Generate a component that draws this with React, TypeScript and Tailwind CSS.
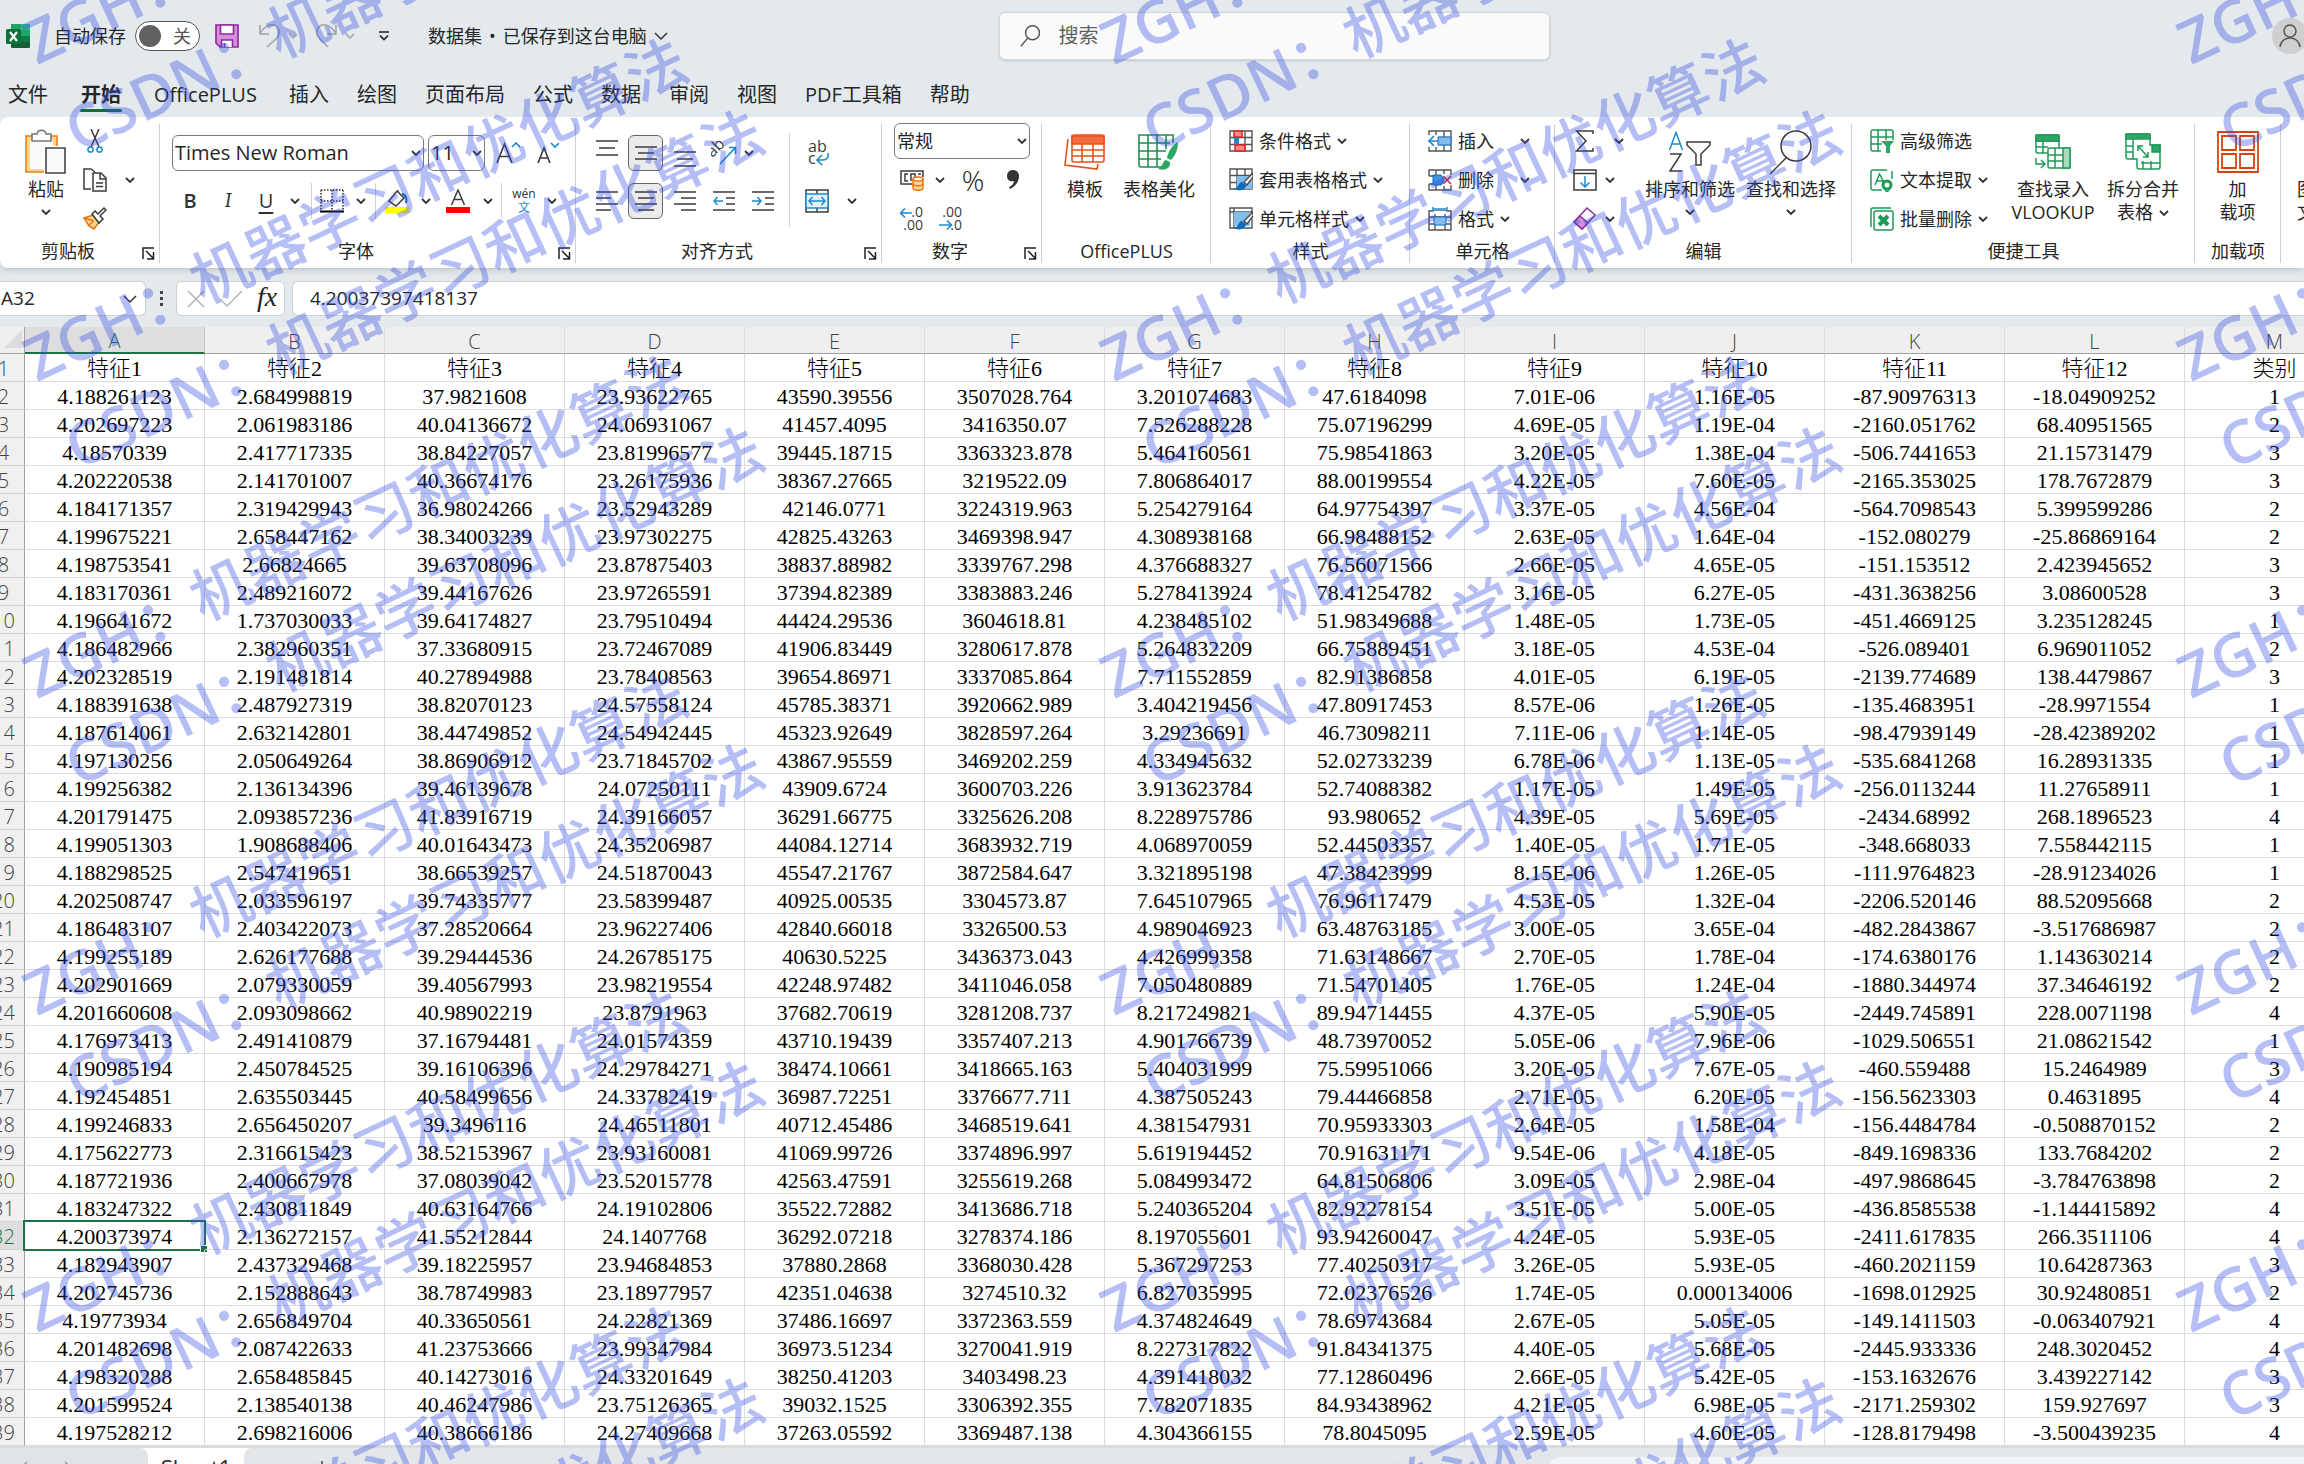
import clsx from "clsx";
import type { ReactNode } from "react";

const Chevron = ({ className = "" }: { className?: string }) => (
  <svg width="10" height="10" viewBox="0 0 10 10" fill="none" className={clsx("shrink-0", className)}>
    <path d="M1 3l4 4 4-4" stroke="#333" strokeWidth="1.8" />
  </svg>
);

const WideChevron = ({ className = "" }: { className?: string }) => (
  <svg width="14" height="10" viewBox="0 0 14 10" fill="none" className={clsx("shrink-0", className)}>
    <path d="M1 2l6 6 6-6" stroke="#333" strokeWidth="1.5" />
  </svg>
);

const Launcher = () => (
  <button aria-label="更多设置" className="absolute right-[5px] bottom-[8px]">
    <svg width="13" height="13" viewBox="0 0 13 13" fill="none" stroke="#222" strokeWidth="1.5">
      <path d="M1 12V1h11M4 4l7 7M11.5 5v7H5" />
    </svg>
  </button>
);

const ExcelLogo = () => (
  <svg width="24" height="24" viewBox="0 0 24 24">
    <rect x="5" y="0" width="19" height="24" rx="1.5" fill="#21a366" />
    <path d="M5 0h10v6H5z" fill="#21a366" />
    <path d="M15 0h7.5A1.5 1.5 0 0124 1.5V6h-9z" fill="#33c481" />
    <path d="M5 6h10v12H5zM15 12h9v6h-9z" fill="#107c41" />
    <path d="M5 18h19v4.5a1.5 1.5 0 01-1.5 1.5h-16A1.5 1.5 0 015 22.5z" fill="#185c37" />
    <rect x="0" y="5" width="15" height="15" rx="1.5" fill="#0f703b" />
    <path d="M4 8l7 9M11 8l-7 9" stroke="#fff" strokeWidth="2.2" />
  </svg>
);

const SaveIcon = () => (
  <svg width="24" height="24" viewBox="0 0 24 24" stroke="#8f2c9c" strokeWidth="1.7">
    <path d="M1 1h22v22H5l-4-4z" fill="#d68fdb" />
    <path d="M5.500 1h13v9h-13z" fill="#fff" />
    <path d="M6.500 23v-7h11v7" fill="#fff" />
    <path d="M9.500 19v4" />
  </svg>
);

const UndoIcon = () => (
  <svg width="24" height="26" viewBox="0 0 24 26" fill="none" stroke="#a0a4a8" strokeWidth="1.6">
    <path d="M2 2v9h9M2 11C6 3 13 0 18 3c5 4 4 9 0 13l-9 8" />
  </svg>
);

const RedoIcon = () => (
  <svg width="24" height="26" viewBox="0 0 24 26" fill="none" stroke="#a0a4a8" strokeWidth="1.6">
    <path d="M22 2v9h-9M22 11C18 3 11 0 6 3c-5 4-4 9 0 13l8 8" />
  </svg>
);

const PasteIcon = () => (
  <svg width="42" height="46" viewBox="0 0 42 46" fill="none">
    <path d="M1 7h31v36H1z" fill="#fad68f" stroke="#e8811c" strokeWidth="1.6" />
    <path d="M5 11h23v29H5z" fill="#fafafa" />
    <path d="M7 5h5c1-5 8-5 9 0h5v7H7z" fill="#fff" stroke="#777" strokeWidth="1.6" />
    <path d="M19 17h22v29H19z" fill="#fff" />
    <path d="M21 19h19v25H21z" fill="#fafafa" stroke="#444" strokeWidth="1.6" />
  </svg>
);

const CutIcon = () => (
  <svg width="16" height="24" viewBox="0 0 16 24" fill="none" strokeWidth="1.5">
    <path d="M4 0l8 18M12 0L4 18" stroke="#3b3b3b" />
    <circle cx="3.500" cy="20.500" r="2.600" stroke="#1e8bcd" />
    <circle cx="12.500" cy="20.500" r="2.600" stroke="#1e8bcd" />
  </svg>
);

const CopyIcon = () => (
  <svg width="24" height="24" viewBox="0 0 24 24" fill="none" stroke="#3b3b3b" strokeWidth="1.5">
    <path d="M8 21H1V1h7l4 3" />
    <path d="M10 5h8l5 5v13H10zM17 5v6h6" fill="#fff" />
    <path d="M13 15h7M13 18.500h7" />
  </svg>
);

const BrushIcon = () => (
  <svg width="24" height="23" viewBox="0 0 24 23" fill="none" strokeWidth="1.5">
    <path d="M1 11l9-3 6 7-5 7-5-3z" fill="#fad68f" stroke="#e8730c" />
    <path d="M1 11l10 3M6 18l4-3" stroke="#e8730c" />
    <path d="M9 7l3-3 3 3 6-6 2 2-6 6 3 3-4 4z" fill="#fff" stroke="#3b3b3b" />
  </svg>
);

const BordersIcon = () => (
  <svg width="24" height="24" viewBox="0 0 24 24" fill="none" stroke="#333">
    <path d="M1 1h22M1 12h22M1 1v20M12 1v20M23 1v20" strokeWidth="1.6" strokeDasharray="1.500 1.500" />
    <path d="M0 22.500h24" strokeWidth="2" stroke="#000" />
  </svg>
);

const FillIcon = () => (
  <svg width="24" height="24" viewBox="0 0 24 24" fill="none">
    <path d="M12 2L4 12l7 5 8-8-6-6V1" stroke="#3b3b3b" strokeWidth="1.5" />
    <path d="M17 5c5 1 5 6 4 9" stroke="#0f6cbd" strokeWidth="2" />
    <path d="M0 18h24v6H0z" fill="#ff0" />
  </svg>
);

const FontColorIcon = () => (
  <svg width="24" height="24" viewBox="0 0 24 24" fill="none">
    <path d="M5.500 16L12 1l6.500 15M8 10.500h8" stroke="#3b3b3b" strokeWidth="1.5" />
    <path d="M0 18h24v6H0z" fill="#f00" />
  </svg>
);

// Horizontal strokes as [x1, x2, y] inside a 22x20 box
const Lines = ({ rows, children }: { rows: number[][]; children?: ReactNode }) => (
  <svg width="22" height="20" viewBox="0 0 22 20" fill="none" strokeWidth="1.5">
    {rows.map(([a, b, y]) => (
      <path key={y} d={`M${a} ${y}H${b}`} stroke="#3b3b3b" />
    ))}
    {children}
  </svg>
);

const OrientationIcon = () => (
  <svg width="26" height="26" viewBox="0 0 26 26" fill="none">
    <text x="1" y="15" fontSize="16" fill="#3b3b3b" transform="rotate(-45 5 16)">ab</text>
    <path d="M9 24L24 8M18 7.500h6.500V14" stroke="#1e8bcd" strokeWidth="1.6" />
  </svg>
);

const WrapIcon = () => (
  <svg width="22" height="26" viewBox="0 0 22 26" fill="none">
    <text x="0" y="12" fontSize="16" fill="#3b3b3b">ab</text>
    <text x="0" y="24" fontSize="16" fill="#3b3b3b">c</text>
    <path d="M20 13c1 4-1 7-5 7h-5M14 15l-5 5 5 5" stroke="#1e8bcd" strokeWidth="1.6" />
  </svg>
);

const MergeIcon = () => (
  <svg width="24" height="24" viewBox="0 0 24 24" fill="none" strokeWidth="1.5">
    <path d="M1 1h22v22H1zM12 1v4M12 19v4" stroke="#3b3b3b" />
    <path d="M1 5h22v14H1z" fill="#e4f1fb" stroke="#1e8bcd" />
    <path d="M4 12h16M7.500 8L4 12l3.500 4M16.500 8l3.500 4-3.500 4" stroke="#1e8bcd" />
  </svg>
);

const CurrencyIcon = () => (
  <svg width="24" height="22" viewBox="0 0 24 22" fill="none" strokeWidth="1.5">
    <path d="M12 15H1V2h22v6" stroke="#3b3b3b" />
    <path d="M8 5H5v7h3M11 12V5h4v3M18 5h3" stroke="#3b3b3b" />
    <path d="M13 10v9c0 3 10 3 10 0v-9" fill="#fad68f" stroke="#e8730c" />
    <ellipse cx="18" cy="10" rx="5" ry="2" fill="#fff" stroke="#e8730c" />
    <path d="M13 14.500c0 3 10 3 10 0" stroke="#e8730c" />
  </svg>
);

const DecimalIcon = ({ less = false }: { less?: boolean }) => (
  <svg width="26" height="26" viewBox="0 0 26 26" fill="none">
    <text x="24" y="11" fontSize="14" fill="#3b3b3b" textAnchor="end">{less ? ".00" : ".0"}</text>
    <text x="24" y="24" fontSize="14" fill="#3b3b3b" textAnchor="end">{less ? ".0" : ".00"}</text>
    <path
      d={less ? "M1 19h12M9 14.500l4.500 4.500L9 23.500" : "M2 7h11M6 2.500L1.500 7 6 11.500"}
      stroke="#1e8bcd"
      strokeWidth="1.6"
    />
  </svg>
);

const TemplateIcon = () => (
  <svg width="42" height="36" viewBox="0 0 42 36" fill="none" stroke="#e8521a" strokeWidth="1.6">
    <path d="M4 5L1 31l32 4 1-5" />
    <rect x="8" y="1" width="32" height="27" rx="2" fill="#fff" />
    <path d="M8 2h32v8H8z" fill="#f26b3a" />
    <path d="M8 16h32M8 22h32M18 10v18M29 10v18" />
  </svg>
);

const BeautifyIcon = () => (
  <svg width="42" height="36" viewBox="0 0 42 36" fill="none" stroke="#1e8e4e" strokeWidth="1.6">
    <path d="M24 33H3a2 2 0 01-2-2V1h34v8M1 9h31M1 17h27M1 25h22M10 1v32M19 1v32M28 1v14" />
    <path d="M40 8c-6 3-10 10-11 16l4 2c5-5 7-12 7-18zM28 26c-4 1-2 6-8 9 6 2 13 0 12-7z" fill="#2ba866" stroke="none" />
  </svg>
);

const grid = "M1 1h22v20H1zM1 7.500h22M1 14.500h22M8 1v20M16 1v20";

const CondFormatIcon = () => (
  <svg width="24" height="22" viewBox="0 0 24 22" fill="none">
    <path d={grid} stroke="#555" strokeWidth="1.4" />
    <path d="M5 7h5v8H5z" fill="#1e8bcd" />
    <path d="M5 1h8v6H5zM6 15h10v6H6z" fill="#f88" stroke="#e02020" strokeWidth="1.500" />
  </svg>
);

const StyleIcon = ({ cell = false }: { cell?: boolean }) => (
  <svg width="24" height="23" viewBox="0 0 24 23" fill="none">
    <path d={cell ? "M1 1h22v20H1zM1 5h22M5 1v20" : grid} stroke="#555" strokeWidth="1.4" />
    <path d={cell ? "M5 5h16v14H5z" : "M8 8h15v13H8z"} fill="#83bdec" />
    <path d="M24 5l-9 9 3 3 6-8z" fill="#fff" stroke="#444" strokeWidth="1.3" />
    <path d="M13 14c-4 0-3 6-8 7 5 3 12 1 12-4z" fill="#0f6cbd" />
  </svg>
);

const InsertIcon = () => (
  <svg width="24" height="22" viewBox="0 0 24 22" fill="none">
    <path d={grid} stroke="#555" strokeWidth="1.4" />
    <path d="M0 5h10v12H0z" fill="#fff" />
    <path d="M10 7h13v8H10z" fill="#83bdec" stroke="#0f6cbd" />
    <path d="M11 11H1M6 6l-5 5 5 5" stroke="#1e8bcd" strokeWidth="1.7" />
  </svg>
);

const DeleteIcon = () => (
  <svg width="24" height="22" viewBox="0 0 24 22" fill="none">
    <path d="M1 7V1h22v5M1 15v6h22v-5M8 1v5M16 1v4M8 16v5M16 17v4M1 7h5M1 15h5" stroke="#555" strokeWidth="1.4" />
    <path d="M5 6h8l3 5-3 5H5z" fill="#3f95e0" stroke="#0f6cbd" />
    <path d="M15 7l8 8M23 7l-8 8" stroke="#d13438" strokeWidth="1.7" />
  </svg>
);

const FormatIcon = () => (
  <svg width="24" height="24" viewBox="0 0 24 24" fill="none">
    <path d="M1 4h22v19H1zM1 10h22M1 17h22M7 4v19M17 4v19" stroke="#555" strokeWidth="1.4" />
    <path d="M4 4h16v3H4z" fill="#fff" />
    <path d="M6 10h12v8H6z" fill="#83bdec" stroke="#0f6cbd" />
    <path d="M5 2h14M5 0v5M19 0v5" stroke="#1e8bcd" strokeWidth="1.5" />
  </svg>
);

const SigmaIcon = () => (
  <svg width="20" height="22" viewBox="0 0 20 22" fill="none" stroke="#3b3b3b" strokeWidth="1.5">
    <path d="M18 4V1H1.500L11 11 1.500 21H18v-3" />
  </svg>
);

const FillDownIcon = () => (
  <svg width="24" height="22" viewBox="0 0 24 22" fill="none" strokeWidth="1.5">
    <path d="M1 1h22v20H1zM1 4.500h22" stroke="#3b3b3b" />
    <path d="M12 7v11M7.500 13.500L12 18l4.500-4.500" stroke="#1e8bcd" />
  </svg>
);

const EraserIcon = () => (
  <svg width="24" height="23" viewBox="0 0 24 23" stroke="#8f2c9c" strokeWidth="1.500">
    <path d="M14 1l8 7-13 14-8-7z" fill="#fff" />
    <path d="M7 9l8 7-6 6-8-7z" fill="#d68fdb" />
  </svg>
);

const SortIcon = () => (
  <svg width="44" height="42" viewBox="0 0 44 42" fill="none" strokeWidth="1.5">
    <path d="M1.500 19L8 1.500 14.500 19M4 13h8" stroke="#1e8bcd" />
    <path d="M2 23h11L2 40h12" stroke="#3b3b3b" />
    <path d="M19 11h23v3l-9 9v11h-5V23l-9-9z" fill="#fafafa" stroke="#3b3b3b" />
  </svg>
);

const FindIcon = () => (
  <svg width="44" height="46" viewBox="0 0 44 46" fill="none" stroke="#3b3b3b" strokeWidth="1.5">
    <circle cx="27" cy="17" r="15" fill="#fafafa" />
    <path d="M17 29L1 45" />
  </svg>
);

const FilterIcon = () => (
  <svg width="24" height="24" viewBox="0 0 24 24" fill="none" stroke="#1e9a57" strokeWidth="1.500">
    <path d="M11 22H3a2 2 0 01-2-2V3a2 2 0 012-2h18a2 2 0 012 2v8M1 8h22M1 15h11M8 1v21M16 1v10" />
    <path d="M11 12h13l-4 5v7h-4v-7z" fill="#2ba866" stroke="none" />
  </svg>
);

const ExtractIcon = () => (
  <svg width="24" height="24" viewBox="0 0 24 24" fill="none" stroke="#1e9a57" strokeWidth="1.500">
    <path d="M12 22H3a2 2 0 01-2-2V4a2 2 0 012-2h14M22 3v8M5 17l4.500-11L14 14M7 13h6" />
    <circle cx="17" cy="17" r="4" strokeWidth="3" />
    <path d="M15 22l2 2 2-2" />
  </svg>
);

const BatchDeleteIcon = () => (
  <svg width="24" height="24" viewBox="0 0 24 24" fill="none" stroke="#1e9a57" strokeWidth="1.500">
    <path d="M1 20V3a2 2 0 012-2h18" />
    <rect x="4" y="4" width="19" height="19" rx="2" />
    <path d="M9 9l9 9M18 9l-9 9" strokeWidth="4" />
  </svg>
);

const LookupIcon = () => (
  <svg width="36" height="36" viewBox="0 0 36 36" fill="none" stroke="#1e9a57" strokeWidth="1.500">
    <rect x="1" y="1" width="23" height="18" rx="2" />
    <path d="M1 7h23M1 13h12M8 7v12M1 24v6h8M6 26l4 4-4 4" />
    <path d="M1 1h23v6H1z" fill="#2ba866" />
    <rect x="13" y="14" width="22" height="20" rx="2" fill="#fff" />
    <path d="M13 21h22M13 27h22M20 14v20" />
    <path d="M28 14h7v20h-7z" fill="#a8dcc0" />
  </svg>
);

const SplitIcon = () => (
  <svg width="36" height="38" viewBox="0 0 36 38" fill="none" stroke="#1e9a57" strokeWidth="1.500">
    <path d="M1 3a2 2 0 012-2h20a2 2 0 012 2v9h10v22a2 2 0 01-2 2H14a2 2 0 01-2-2v-8H3a2 2 0 01-2-2zM1 13h7M1 19h7M8 6v20M16 30h19M18 28v8M26 28v8" />
    <path d="M1 1h24v5H1zM27 12h8v7h-8z" fill="#2ba866" />
    <path d="M13 13l10 11M13 18v-5h5M23 19v5h-5" />
  </svg>
);

const AddInsIcon = () => (
  <svg width="42" height="42" viewBox="0 0 42 42" fill="none" stroke="#d8430f" strokeWidth="1.800">
    <path d="M1 1h40v40H1z" />
    <path d="M5 5h14v14H5zM23 5h14v14H23zM5 23h14v14H5zM23 23h14v14H23z" />
  </svg>
);

type GroupProps = { label: string; className: string; launcher?: boolean; children: ReactNode };

const Group = ({ label, className, launcher, children }: GroupProps) => (
  <section className={clsx("relative flex shrink-0 flex-col", className)}>
    <div className="flex h-[118px]">{children}</div>
    <h2 className={clsx("text-center text-lg leading-6", launcher && "pr-6")}>{label}</h2>
    {launcher && <Launcher />}
    <span className="absolute top-[3px] right-0 bottom-[5px] w-px bg-[#d0d0d0]" />
  </section>
);

const BigButton = ({ icon, lines, chevron, className = "" }: any) => (
  <button className={clsx("flex flex-col items-center text-lg leading-[23px] whitespace-nowrap", className)}>
    <span className="flex h-[57px] items-center pt-1">{icon}</span>
    {lines.map((line: string, i: number) => (
      <span key={line} className="flex items-center gap-[6px]">
        {line}
        {chevron === "inline" && i === lines.length - 1 && <Chevron />}
      </span>
    ))}
    {chevron === "below" && <Chevron className="mt-[6px]" />}
  </button>
);

const RowButton = ({ icon, text, chevron = true, wide = false }: any) => (
  <button className="flex h-[39px] items-center gap-[6px] text-lg whitespace-nowrap">
    <span className="flex w-6 justify-center">{icon}</span>
    {text}
    {chevron && <Chevron className={wide ? "ml-[20px]" : ""} />}
  </button>
);

const IconButton = ({ label, className = "", children }: any) => (
  <button aria-label={label} className={clsx("flex h-9 shrink-0 items-center justify-center", className)}>
    {children}
  </button>
);

const Combo = ({ label, value, className, textClass = "" }: any) => (
  <label className={clsx("relative block h-9 shrink-0", className)}>
    <span className="sr-only">{label}</span>
    <select
      className={clsx(
        "h-9 w-full appearance-none rounded-md border border-[#7a7a7a] bg-white pl-[2px]",
        textClass
      )}
    >
      <option>{value}</option>
    </select>
    <Chevron className="pointer-events-none absolute top-[13px] right-[3px]" />
  </label>
);

const Sep = ({ className = "" }: { className?: string }) => (
  <span className={clsx("w-px shrink-0 self-stretch bg-[#d0d0d0]", className)} />
);

const TitleBar = () => (
  <header className="flex h-[73px] shrink-0 items-start">
    <div className="flex h-[72px] w-[999px] shrink-0 items-center pl-[6px] text-lg leading-6">
      <ExcelLogo />
      <label className="ml-6 flex items-center gap-[9px]">
        自动保存
        <input type="checkbox" role="switch" className="sr-only" />
        <span className="flex h-[30px] w-[65px] items-center justify-between rounded-full border border-[#555] bg-white pr-2 pl-[3px] text-[#555]">
          <span className="size-[22px] rounded-full bg-[#606060]" />关
        </span>
      </label>
      <IconButton label="保存" className="ml-[15px]"><SaveIcon /></IconButton>
      <IconButton label="撤消" className="ml-[19px]"><UndoIcon /></IconButton>
      <Chevron className="ml-[6px] opacity-30" />
      <IconButton label="恢复" className="ml-[16px]"><RedoIcon /></IconButton>
      <Chevron className="ml-[7px] opacity-30" />
      <IconButton label="自定义快速访问工具栏" className="ml-[23px]">
        <svg width="12" height="12" viewBox="0 0 12 12" fill="none" stroke="#222" strokeWidth="1.700">
          <path d="M1 2h10M2 5.500l4 4 4-4" />
        </svg>
      </IconButton>
      <button className="ml-[38px] flex items-center gap-[7px] whitespace-nowrap">
        <span>数据集</span>
        <span>•</span>
        <span>已保存到这台电脑</span>
        <WideChevron />
      </button>
    </div>
    <label className="mt-3 flex h-12 w-[551px] shrink-0 items-center rounded-md border border-[#d5d5d5] bg-[#fafafa] pl-5 shadow-sm">
      <svg width="22" height="24" viewBox="0 0 22 24" fill="none" stroke="#555" strokeWidth="1.500">
        <circle cx="13.500" cy="8.500" r="7.500" />
        <path d="M8.500 14L1 23" />
      </svg>
      <input aria-label="搜索" placeholder="搜索" className="ml-[18px] w-full bg-transparent text-xl outline-none placeholder:text-[#606060]" />
    </label>
    <button aria-label="帐户" className="mt-[18px] -mr-1 ml-auto flex size-9 items-center justify-center rounded-full bg-[#cfcfcf]">
      <svg width="22" height="24" viewBox="0 0 22 24" fill="none" stroke="#555" strokeWidth="1.500">
        <circle cx="11" cy="7" r="6" />
        <path d="M1 23c1-12 19-12 20 0" />
      </svg>
    </button>
  </header>
);

const tabs = ["文件", "开始", "OfficePLUS", "插入", "绘图", "页面布局", "公式", "数据", "审阅", "视图", "PDF工具箱", "帮助"];

const TabBar = () => (
  <nav className="flex h-11 shrink-0 gap-7 pl-2 text-xl">
    {tabs.map((tab) => (
      <button
        key={tab}
        className={clsx(
          "flex h-11 flex-col items-center whitespace-nowrap",
          tab === "开始" && "mx-1 font-bold",
          tab === "OfficePLUS" && "mr-1"
        )}
      >
        <span className="h-9 leading-[44px]">{tab}</span>
        {tab === "开始" && <span className="h-[3px] w-[42px] rounded-full bg-[#0f703b]" />}
      </button>
    ))}
  </nav>
);

const Ribbon = () => (
  <div className="flex h-[151px] shrink-0 overflow-hidden rounded-l-lg bg-white pt-1 shadow-md">
    <Group label="剪贴板" className="w-[160px]" launcher>
      <BigButton icon={<PasteIcon />} lines={["粘贴"]} chevron="below" className="ml-[22px] w-[48px]" />
      <div className="ml-[13px]">
        <IconButton label="剪切" className="h-[39px] w-6"><CutIcon /></IconButton>
        <div className="flex items-center gap-[18px]">
          <IconButton label="复制" className="h-[39px] w-6"><CopyIcon /></IconButton>
          <Chevron />
        </div>
        <IconButton label="格式刷" className="h-[39px] w-6"><BrushIcon /></IconButton>
      </div>
    </Group>

    <Group label="字体" className="w-[416px]" launcher>
      <div className="flex flex-col gap-3 pt-[14px]">
        <div className="flex items-center pl-3">
          <Combo label="字体" value="Times New Roman" className="w-[252px]" textClass="text-xl" />
          <Combo label="字号" value="11" className="ml-1 w-[57px]" textClass="text-xl" />
          <IconButton label="增大字号" className="ml-[4px] w-[38px]">
            <svg width="26" height="24" viewBox="0 0 26 24" fill="none" strokeWidth="1.600">
              <path d="M2 22L9.500 3 17 22M5 15.500h9" stroke="#3b3b3b" />
              <path d="M17 6l4-4 4 4" stroke="#1e8bcd" />
            </svg>
          </IconButton>
          <IconButton label="减小字号" className="w-[38px]">
            <svg width="26" height="24" viewBox="0 0 26 24" fill="none" strokeWidth="1.600">
              <path d="M5 22l6-15 6 15M7 17h8" stroke="#3b3b3b" />
              <path d="M18 2l4 4 4-4" stroke="#1e8bcd" />
            </svg>
          </IconButton>
        </div>
        <div className="flex items-center pl-[11px] text-[#333]">
          <IconButton label="加粗" className="w-[38px] text-xl font-semibold">B</IconButton>
          <IconButton label="倾斜" className="w-[38px] font-serif text-xl italic">I</IconButton>
          <IconButton label="下划线" className="w-[38px] text-xl underline underline-offset-4">U</IconButton>
          <IconButton label="下划线样式" className="w-5"><Chevron /></IconButton>
          <Sep className="mx-[6px]" />
          <IconButton label="边框" className="w-7"><BordersIcon /></IconButton>
          <IconButton label="边框样式" className="w-[29px]"><Chevron /></IconButton>
          <Sep />
          <IconButton label="填充颜色" className="w-[41px]"><FillIcon /></IconButton>
          <IconButton label="选择填充颜色" className="w-[18px]"><Chevron /></IconButton>
          <IconButton label="字体颜色" className="w-[46px]"><FontColorIcon /></IconButton>
          <IconButton label="选择字体颜色" className="w-[14px]"><Chevron /></IconButton>
          <Sep className="mx-[6px]" />
          <IconButton label="拼音" className="w-8 flex-col text-xs leading-[14px]">
            wén<span className="text-[#1e8bcd]">文</span>
          </IconButton>
          <IconButton label="拼音设置" className="w-6"><Chevron /></IconButton>
        </div>
      </div>
    </Group>

    <Group label="对齐方式" className="w-[306px]" launcher>
      <div className="flex flex-col gap-3 pt-[14px] pl-[11px]">
        <div className="flex">
          <IconButton label="顶端对齐" className="w-[39px] pb-[10px]"><Lines rows={[[0, 22, 3], [3, 19, 10], [0, 22, 17]]} /></IconButton>
          <IconButton label="垂直居中" className="mx-[2px] w-[35px] rounded-md border border-[#666] bg-[#ebebeb]"><Lines rows={[[0, 22, 4], [3, 19, 10], [0, 22, 16]]} /></IconButton>
          <IconButton label="底端对齐" className="w-[39px] pt-[12px]"><Lines rows={[[0, 22, 3], [3, 19, 10], [0, 22, 17]]} /></IconButton>
          <IconButton label="方向" className="w-[39px]"><OrientationIcon /></IconButton>
          <IconButton label="方向选项" className="w-3"><Chevron /></IconButton>
        </div>
        <div className="flex">
          <IconButton label="左对齐" className="w-[39px]"><Lines rows={[[0, 22, 1], [0, 15, 7], [0, 22, 13], [0, 15, 19]]} /></IconButton>
          <IconButton label="居中" className="mx-[2px] w-[35px] rounded-md border border-[#666] bg-[#ebebeb]"><Lines rows={[[0, 22, 1], [3, 19, 7], [0, 22, 13], [3, 19, 19]]} /></IconButton>
          <IconButton label="右对齐" className="w-[39px]"><Lines rows={[[0, 22, 1], [7, 22, 7], [0, 22, 13], [7, 22, 19]]} /></IconButton>
          <IconButton label="减少缩进量" className="w-[39px]">
            <Lines rows={[[0, 22, 1], [13, 22, 7], [13, 22, 13], [0, 22, 19]]}><path d="M10 10H1M4.500 6L1 10l3.500 4" stroke="#1e8bcd" /></Lines>
          </IconButton>
          <IconButton label="增加缩进量" className="w-[39px]">
            <Lines rows={[[0, 22, 1], [13, 22, 7], [13, 22, 13], [0, 22, 19]]}><path d="M0 10h9M5.500 6L9 10l-3.500 4" stroke="#1e8bcd" /></Lines>
          </IconButton>
        </div>
      </div>
      <Sep className="mt-3 mb-3 ml-[7px]" />
      <div className="flex flex-col gap-3 pt-[14px]">
        <IconButton label="自动换行" className="w-[58px]"><WrapIcon /></IconButton>
        <div className="flex">
          <IconButton label="合并后居中" className="w-[54px]"><MergeIcon /></IconButton>
          <IconButton label="合并选项" className="w-4"><Chevron /></IconButton>
        </div>
      </div>
    </Group>

    <Group label="数字" className="w-[160px]" launcher>
      <div className="flex flex-col gap-[3px] pt-[2px] pl-3">
        <Combo label="数字格式" value="常规" className="w-[136px]" textClass="text-lg" />
        <div className="flex items-center">
          <IconButton label="会计数字格式" className="w-9"><CurrencyIcon /></IconButton>
          <IconButton label="会计格式选项" className="w-5"><Chevron /></IconButton>
          <IconButton label="百分比样式" className="w-[46px] text-[28px] font-light text-[#222]">%</IconButton>
          <IconButton label="千位分隔样式" className="w-[34px]">
            <svg width="12" height="20" viewBox="0 0 12 20" fill="#333">
              <path d="M6 0c4 0 6 3 6 6 0 6-4 11-9 13l-1-2c3-1 5-4 5-6C3 12 0 10 0 6c0-3 2-6 6-6z" />
            </svg>
          </IconButton>
        </div>
        <div className="flex items-center">
          <IconButton label="增加小数位数" className="w-9"><DecimalIcon /></IconButton>
          <IconButton label="减少小数位数" className="w-[42px]"><DecimalIcon less /></IconButton>
        </div>
      </div>
    </Group>

    <Group label="OfficePLUS" className="w-[169px]">
      <BigButton icon={<TemplateIcon />} lines={["模板"]} className="ml-[15px] w-[56px]" />
      <BigButton icon={<BeautifyIcon />} lines={["表格美化"]} className="ml-2 w-[76px]" />
    </Group>

    <Group label="样式" className="w-[199px]">
      <div className="pl-[18px]">
        <RowButton icon={<CondFormatIcon />} text="条件格式" />
        <RowButton icon={<StyleIcon />} text="套用表格格式" />
        <RowButton icon={<StyleIcon cell />} text="单元格样式" />
      </div>
    </Group>

    <Group label="单元格" className="w-[145px]">
      <div className="pl-[18px]">
        <RowButton icon={<InsertIcon />} text="插入" wide />
        <RowButton icon={<DeleteIcon />} text="删除" wide />
        <RowButton icon={<FormatIcon />} text="格式" />
      </div>
    </Group>

    <Group label="编辑" className="w-[297px]">
      <div className="w-[82px] pl-[18px]">
        <div className="flex items-center gap-[17px]">
          <IconButton label="自动求和" className="h-[39px] w-6"><SigmaIcon /></IconButton>
          <Chevron />
        </div>
        <div className="flex items-center gap-[8px]">
          <IconButton label="填充" className="h-[39px] w-6"><FillDownIcon /></IconButton>
          <Chevron />
        </div>
        <div className="flex items-center gap-[8px]">
          <IconButton label="清除" className="h-[39px] w-6"><EraserIcon /></IconButton>
          <Chevron />
        </div>
      </div>
      <BigButton icon={<SortIcon />} lines={["排序和筛选"]} chevron="below" className="ml-[7px] w-[92px]" />
      <BigButton icon={<FindIcon />} lines={["查找和选择"]} chevron="below" className="ml-[9px] w-[92px]" />
    </Group>

    <Group label="便捷工具" className="w-[343px]">
      <div className="w-[136px] pl-[18px]">
        <RowButton icon={<FilterIcon />} text="高级筛选" chevron={false} />
        <RowButton icon={<ExtractIcon />} text="文本提取" />
        <RowButton icon={<BatchDeleteIcon />} text="批量删除" />
      </div>
      <BigButton icon={<LookupIcon />} lines={["查找录入", "VLOOKUP"]} className="ml-5 w-[90px]" />
      <BigButton icon={<SplitIcon />} lines={["拆分合并", "表格"]} chevron="inline" className="ml-1 w-[82px]" />
    </Group>

    <Group label="加载项" className="w-[86px]">
      <BigButton icon={<AddInsIcon />} lines={["加", "载项"]} className="w-[85px]" />
    </Group>

    <div className="shrink-0 pt-[57px] pl-4 text-lg leading-[23px]">
      <p>图片</p>
      <p>文字</p>
    </div>
  </div>
);

const FormulaBar = () => (
  <div className="flex h-[59px] shrink-0 gap-[7px] pt-[13px] pb-[11px]">
    <div className="flex w-[146px] items-center justify-between rounded-r-md border border-l-0 border-[#d0d0d0] bg-white pr-[8px]">
      <input aria-label="名称框" defaultValue="A32" className="w-24 pl-px text-[19px] outline-none" />
      <WideChevron />
    </div>
    <span className="flex w-4 flex-col items-center justify-center gap-[3px]">
      <i className="size-[3px] bg-[#444]" />
      <i className="size-[3px] bg-[#444]" />
      <i className="size-[3px] bg-[#444]" />
    </span>
    <div className="flex w-[109px] items-center rounded-md border border-[#d0d0d0] bg-white">
      <IconButton label="取消" className="w-[37px]">
        <svg width="18" height="18" viewBox="0 0 18 18" fill="none" stroke="#b5b5b5" strokeWidth="1.500"><path d="M1 1l16 16M17 1L1 17" /></svg>
      </IconButton>
      <IconButton label="输入" className="w-[34px]">
        <svg width="24" height="18" viewBox="0 0 24 18" fill="none" stroke="#b5b5b5" strokeWidth="1.500"><path d="M1 9l7 7L23 1" /></svg>
      </IconButton>
      <IconButton label="插入函数" className="w-[38px] pb-1 font-['Liberation_Serif',serif] text-[28px] italic">fx</IconButton>
    </div>
    <input
      aria-label="编辑栏"
      defaultValue="4.20037397418137"
      className="min-w-0 flex-1 rounded-l-md border border-r-0 border-[#d0d0d0] bg-white pl-[17px] text-[19px] outline-none"
    />
  </div>
);

const columns = "ABCDEFGHIJKLM".split("");

const data = `特征1 特征2 特征3 特征4 特征5 特征6 特征7 特征8 特征9 特征10 特征11 特征12 类别
4.188261123 2.684998819 37.9821608 23.93622765 43590.39556 3507028.764 3.201074683 47.6184098 7.01E-06 1.16E-05 -87.90976313 -18.04909252 1
4.202697223 2.061983186 40.04136672 24.06931067 41457.4095 3416350.07 7.526288228 75.07196299 4.69E-05 1.19E-04 -2160.051762 68.40951565 2
4.18570339 2.417717335 38.84227057 23.81996577 39445.18715 3363323.878 5.464160561 75.98541863 3.20E-05 1.38E-04 -506.7441653 21.15731479 3
4.202220538 2.141701007 40.36674176 23.26175936 38367.27665 3219522.09 7.806864017 88.00199554 4.22E-05 7.60E-05 -2165.353025 178.7672879 3
4.184171357 2.319429943 36.98024266 23.52943289 42146.0771 3224319.963 5.254279164 64.97754397 3.37E-05 4.56E-04 -564.7098543 5.399599286 2
4.199675221 2.658447162 38.34003239 23.97302275 42825.43263 3469398.947 4.308938168 66.98488152 2.63E-05 1.64E-04 -152.080279 -25.86869164 2
4.198753541 2.66824665 39.63708096 23.87875403 38837.88982 3339767.298 4.376688327 76.56071566 2.66E-05 4.65E-05 -151.153512 2.423945652 3
4.183170361 2.489216072 39.44167626 23.97265591 37394.82389 3383883.246 5.278413924 78.41254782 3.16E-05 6.27E-05 -431.3638256 3.08600528 3
4.196641672 1.737030033 39.64174827 23.79510494 44424.29536 3604618.81 4.238485102 51.98349688 1.48E-05 1.73E-05 -451.4669125 3.235128245 1
4.186482966 2.382960351 37.33680915 23.72467089 41906.83449 3280617.878 5.264832209 66.75889451 3.18E-05 4.53E-04 -526.089401 6.969011052 2
4.202328519 2.191481814 40.27894988 23.78408563 39654.86971 3337085.864 7.711552859 82.91386858 4.01E-05 6.19E-05 -2139.774689 138.4479867 3
4.188391638 2.487927319 38.82070123 24.57558124 45785.38371 3920662.989 3.404219456 47.80917453 8.57E-06 1.26E-05 -135.4683951 -28.9971554 1
4.187614061 2.632142801 38.44749852 24.54942445 45323.92649 3828597.264 3.29236691 46.73098211 7.11E-06 1.14E-05 -98.47939149 -28.42389202 1
4.197130256 2.050649264 38.86906912 23.71845702 43867.95559 3469202.259 4.334945632 52.02733239 6.78E-06 1.13E-05 -535.6841268 16.28931335 1
4.199256382 2.136134396 39.46139678 24.07250111 43909.6724 3600703.226 3.913623784 52.74088382 1.17E-05 1.49E-05 -256.0113244 11.27658911 1
4.201791475 2.093857236 41.83916719 24.39166057 36291.66775 3325626.208 8.228975786 93.980652 4.39E-05 5.69E-05 -2434.68992 268.1896523 4
4.199051303 1.908688406 40.01643473 24.35206987 44084.12714 3683932.719 4.068970059 52.44503357 1.40E-05 1.71E-05 -348.668033 7.558442115 1
4.188298525 2.547419651 38.66539257 24.51870043 45547.21767 3872584.647 3.321895198 47.38423999 8.15E-06 1.26E-05 -111.9764823 -28.91234026 1
4.202508747 2.033596197 39.74335777 23.58399487 40925.00535 3304573.87 7.645107965 76.96117479 4.53E-05 1.32E-04 -2206.520146 88.52095668 2
4.186483107 2.403422073 37.28520664 23.96227406 42840.66018 3326500.53 4.989046923 63.48763185 3.00E-05 3.65E-04 -482.2843867 -3.517686987 2
4.199255189 2.626177688 39.29444536 24.26785175 40630.5225 3436373.043 4.426999358 71.63148667 2.70E-05 1.78E-04 -174.6380176 1.143630214 2
4.202901669 2.079330059 39.40567993 23.98219554 42248.97482 3411046.058 7.050480889 71.54701405 1.76E-05 1.24E-04 -1880.344974 37.34646192 2
4.201660608 2.093098662 40.98902219 23.8791963 37682.70619 3281208.737 8.217249821 89.94714455 4.37E-05 5.90E-05 -2449.745891 228.0071198 4
4.176973413 2.491410879 37.16794481 24.01574359 43710.19439 3357407.213 4.901766739 48.73970052 5.05E-06 7.96E-06 -1029.506551 21.08621542 1
4.190985194 2.450784525 39.16106396 24.29784271 38474.10661 3418665.163 5.404031999 75.59951066 3.20E-05 7.67E-05 -460.559488 15.2464989 3
4.192454851 2.635503445 40.58499656 24.33782419 36987.72251 3376677.711 4.387505243 79.44466858 2.71E-05 6.20E-05 -156.5623303 0.4631895 4
4.199246833 2.656450207 39.3496116 24.46511801 40712.45486 3468519.641 4.381547931 70.95933303 2.64E-05 1.58E-04 -156.4484784 -0.508870152 2
4.175622773 2.316615423 38.52153967 23.93160081 41069.99726 3374896.997 5.619194452 70.91631171 9.54E-06 4.18E-05 -849.1698336 133.7684202 2
4.187721936 2.400667978 37.08039042 23.52015778 42563.47591 3255619.268 5.084993472 64.81506806 3.09E-05 2.98E-04 -497.9868645 -3.784763898 2
4.183247322 2.430811849 40.63164766 24.19102806 35522.72882 3413686.718 5.240365204 82.92278154 3.51E-05 5.00E-05 -436.8585538 -1.144415892 4
4.200373974 2.136272157 41.55212844 24.1407768 36292.07218 3278374.186 8.197055601 93.94260047 4.24E-05 5.93E-05 -2411.617835 266.3511106 4
4.182943907 2.437329468 39.18225957 23.94684853 37880.2868 3368030.428 5.367297253 77.40250317 3.26E-05 5.93E-05 -460.2021159 10.64287363 3
4.202745736 2.152888643 38.78749983 23.18977957 42351.04638 3274510.32 6.827035995 72.02376526 1.74E-05 0.000134006 -1698.012925 30.92480851 2
4.19773934 2.656849704 40.33650561 24.22821369 37486.16697 3372363.559 4.374824649 78.69743684 2.67E-05 5.05E-05 -149.1411503 -0.063407921 4
4.201482698 2.087422633 41.23753666 23.99347984 36973.51234 3270041.919 8.227317822 91.84341375 4.40E-05 5.68E-05 -2445.933336 248.3020452 4
4.198320288 2.658485845 40.14273016 24.33201649 38250.41203 3403498.23 4.391418032 77.12860496 2.66E-05 5.42E-05 -153.1632676 3.439227142 3
4.201599524 2.138540138 40.46247986 23.75126365 39032.1525 3306392.355 7.782071835 84.93438962 4.21E-05 6.98E-05 -2171.259302 159.927697 3
4.197528212 2.698216006 40.38666186 24.27409668 37263.05592 3369487.138 4.304366155 78.8045095 2.59E-05 4.60E-05 -128.8179498 -3.500439235 4`
  .split("\n")
  .map((line) => line.split(" "));

const Sheet = () => (
  <div className="shrink-0 overflow-hidden bg-white">
    <table className="-ml-[17px] w-[2382px] table-fixed border-separate border-spacing-0 text-center">
      <colgroup>
        <col className="w-[42px]" />
        {columns.map((c) => (
          <col key={c} className="w-[180px]" />
        ))}
      </colgroup>
      <thead>
        <tr className="h-[27px] bg-[#efefef] text-xl leading-[22px] text-[#444]">
          <td className="border-r border-b border-[#a0a0a0] p-0">
            <svg width="20" height="20" viewBox="0 0 20 20" className="ml-auto"><path d="M18 0v18H0z" fill="#dcdcdc" /></svg>
          </td>
          {columns.map((c) => (
            <th
              key={c}
              scope="col"
              className={clsx(
                "border-r p-0 pt-[3px] font-light",
                c === "A"
                  ? "border-b-2 border-r-[#c8c8c8] border-b-[#1e7145] bg-[#dedede] text-[#1e7145]"
                  : "border-b border-r-[#dcdcdc] border-b-[#a0a0a0]"
              )}
            >
              {c}
            </th>
          ))}
        </tr>
      </thead>
      <tbody>
        {data.map((row, r) => (
          <tr key={r} className="h-7">
            <th
              scope="row"
              className={clsx(
                "border-r border-b border-r-[#a0a0a0] border-b-[#d4d4d4] p-0 pt-[2px] text-xl leading-[25px] font-light",
                r === 31 ? "bg-[#dedede] text-[#1e7145]" : "bg-[#f0f0f0] text-[#444]"
              )}
            >
              {r + 1}
            </th>
            {row.map((value, c) => (
              <td
                key={c}
                className={clsx(
                  "relative border-r border-b border-[#dcdcdc] p-0 pt-[2px] font-['Liberation_Serif','Noto_Sans_CJK_SC',serif] text-[22px] leading-[25px] text-black",
                  r === 0 && "font-light"
                )}
              >
                {value}
                {r === 31 && c === 0 && (
                  <span className="absolute -inset-[2px] border-2 border-[#1e7145]">
                    <span className="absolute -right-[3px] -bottom-[3px] size-[7px] border-t border-l border-white bg-[#1e7145]" />
                  </span>
                )}
              </td>
            ))}
          </tr>
        ))}
      </tbody>
    </table>
  </div>
);

const SheetTabs = () => (
  <footer className="flex h-10 shrink-0 border-t-2 border-[#d9dcdf] bg-white">
    <div className="flex w-[148px] items-start gap-9 rounded-tr-lg bg-[#e1e4e7] pt-[13px] pl-5">
      <svg width="8" height="14" viewBox="0 0 8 14" fill="none" stroke="#999" strokeWidth="1.500"><path d="M7 1L1 7l6 6" /></svg>
      <svg width="8" height="14" viewBox="0 0 8 14" fill="none" stroke="#999" strokeWidth="1.500"><path d="M1 1l6 6-6 6" /></svg>
    </div>
    <button className="w-24 text-[22px] leading-7 font-medium">Sheet1</button>
    <div className="flex flex-1 items-start justify-between rounded-tl-lg bg-[#e3e6ea] pt-[9px] pl-[70px]">
      <button aria-label="新工作表" className="pt-1">
        <svg width="16" height="16" viewBox="0 0 16 16" stroke="#444" strokeWidth="1.500"><path d="M8 0v16M0 8h16" /></svg>
      </button>
      <div className="h-8 w-[756px] rounded-tl-xl bg-[#f3f4f5]" />
    </div>
  </footer>
);

const marks = [0, 1, 2].flatMap((i) => [0, 1, 2, 3, 4, 5].map((j) => ({ left: 7 + i * 1077, top: 1 + j * 317 })));

const Watermark = () => (
  <div aria-hidden className="pointer-events-none absolute inset-0 overflow-hidden">
    {marks.map((pos) => (
      <div
        key={`${pos.left}-${pos.top}`}
        style={pos}
        className="absolute origin-top-left -rotate-25 text-[60px] leading-[97px] font-medium whitespace-nowrap text-[#324ee4]/36"
      >
        <p><span className="font-semibold">ZGH</span>：机器学习和优化算法</p>
        <p><span className="font-semibold">CSDN</span>：机器学习和优化算法</p>
      </div>
    ))}
  </div>
);

const App = () => (
  <main className="relative flex h-screen flex-col overflow-hidden bg-[#e4e9ed] font-['Open_Sans','Noto_Sans_CJK_SC',sans-serif] text-[#262626]">
    <TitleBar />
    <TabBar />
    <Ribbon />
    <FormulaBar />
    <Sheet />
    <SheetTabs />
    <Watermark />
  </main>
);

export default App;
